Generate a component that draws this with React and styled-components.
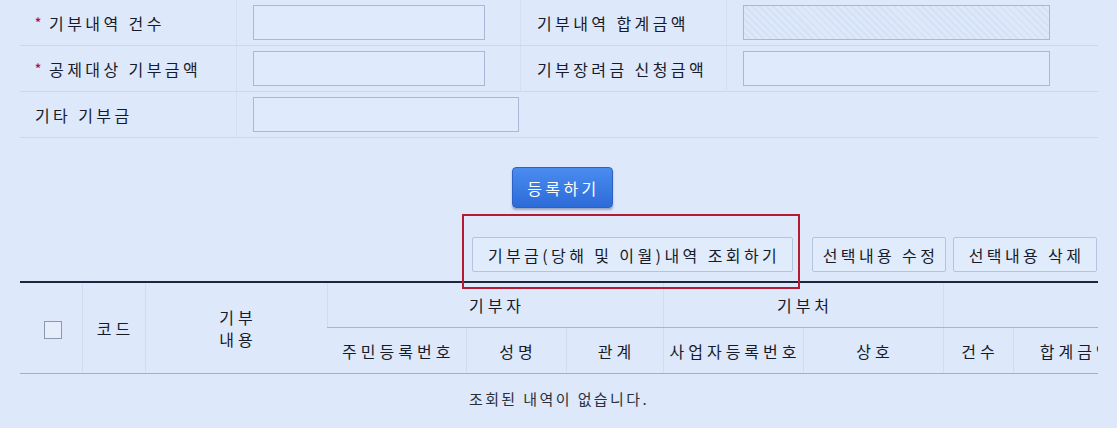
import React from 'react';
import styled, { createGlobalStyle } from 'styled-components';

const GlobalStyle = createGlobalStyle`
  html, body {
    margin: 0;
    padding: 0;
    background: #dde8fb;
  }
  body {
    font-family: "Noto Sans CJK KR", "Noto Sans", sans-serif;
    color: #161b2a;
  }
`;

const Page = styled.div`
  position: relative;
  width: 1117px;
  height: 428px;
  overflow: hidden;
  padding-left: 20px;
  box-sizing: border-box;
`;

const Form = styled.div`
  display: grid;
  grid-template-columns: 217px 284px 206px 371px;
  width: 1078px;
`;

const LabelCell = styled.div`
  display: flex;
  align-items: center;
  height: 46px;
  padding-left: ${p => (p.$pad ? p.$pad : 15)}px;
  border-bottom: 1px solid #cad7ef;
  border-right: 1px solid #d3def2;
  font-size: 16px;
  letter-spacing: 3.4px;
  white-space: nowrap;
  box-sizing: border-box;
`;

const Star = styled.span`
  color: #b2163f;
  font-size: 12px;
  font-weight: 700;
  margin-right: 8px;
  letter-spacing: 0;
  position: relative;
  top: -1px;
`;

const InputCell = styled.div`
  display: flex;
  align-items: center;
  height: 46px;
  padding-left: 16px;
  border-bottom: 1px solid #cad7ef;
  border-right: ${p => (p.$last ? 'none' : '1px solid #d3def2')};
  box-sizing: border-box;
  grid-column: ${p => p.$span || 'auto'};
`;

const TextInput = styled.div`
  width: ${p => p.$w}px;
  height: 35px;
  box-sizing: border-box;
  border: 1px solid #a9b8d6;
  background: ${p =>
    p.$disabled
      ? 'repeating-linear-gradient(45deg, #dde8fb 0px, #dde8fb 3px, #d5e1f6 3px, #d5e1f6 5px)'
      : '#dfeafc'};
`;

const Center = styled.div`
  display: flex;
  justify-content: center;
  width: 1078px;
  padding-top: 29px;
  padding-left: 6px;
  box-sizing: border-box;
`;

const PrimaryButton = styled.button`
  width: 101px;
  height: 41px;
  border: 1px solid #2c62c6;
  border-radius: 4px;
  background: linear-gradient(#4a8cf0, #2d6bd8);
  box-shadow: 0 2px 2px rgba(30, 50, 100, 0.35);
  color: #fff;
  font-family: "Noto Sans CJK KR", sans-serif;
  font-size: 16px;
  letter-spacing: 3.4px;
  text-indent: 3px;
  cursor: pointer;
  padding: 0;
`;

const ActionBar = styled.div`
  display: flex;
  justify-content: flex-end;
  width: 1077px;
  margin-top: 29px;
`;

const ActionButton = styled.button`
  width: ${p => p.$w}px;
  height: 35px;
  margin-left: ${p => p.$gap || 0}px;
  border: 1px solid #b4c4df;
  border-radius: 2px;
  background: #e0ebfc;
  color: #161b2a;
  font-family: "Noto Sans CJK KR", sans-serif;
  font-size: 16px;
  letter-spacing: 3.4px;
  text-indent: 3px;
  padding: 0;
  white-space: nowrap;
`;

const Highlight = styled.div`
  position: absolute;
  left: 462px;
  top: 214px;
  width: 338px;
  height: 75px;
  box-sizing: border-box;
  border: 2px solid #b31b34;
  pointer-events: none;
`;

const TableClip = styled.div`
  width: 1078px;
  overflow: hidden;
  margin-top: 9px;
  border-top: 2px solid #1c2640;
`;

const Table = styled.table`
  width: 1117px;
  table-layout: fixed;
  border-collapse: collapse;
  font-size: 16px;
  letter-spacing: 4px;
`;

const Th = styled.th`
  font-weight: 400;
  height: ${p => p.$h || 44}px;
  padding: 0 0 0 4px;
  text-align: center;
  vertical-align: middle;
  line-height: 22px;
  color: #161b2a;
  border-left: 1px solid #d1dcf1;
  border-bottom: 1px solid ${p => (p.$group ? '#a9b5cc' : '#a3afc7')};
  white-space: nowrap;
  &:first-child {
    border-left: none;
  }
`;

const Check = styled.span`
  display: inline-block;
  width: 16px;
  height: 16px;
  border: 1px solid #8a98b2;
  background: #e6eefc;
  vertical-align: middle;
`;

const Empty = styled.div`
  width: 1078px;
  text-align: center;
  font-size: 15px;
  letter-spacing: 2.4px;
  color: #2a2f3a;
  padding-top: 14px;
`;

export default function App() {
  return (
    <>
      <GlobalStyle />
      <Page>
        <Form>
          <LabelCell>
            <Star>*</Star>기부내역 건수
          </LabelCell>
          <InputCell>
            <TextInput $w={232} />
          </InputCell>
          <LabelCell $pad={16}>기부내역 합계금액</LabelCell>
          <InputCell $last>
            <TextInput $w={307} $disabled />
          </InputCell>

          <LabelCell>
            <Star>*</Star>공제대상 기부금액
          </LabelCell>
          <InputCell>
            <TextInput $w={232} />
          </InputCell>
          <LabelCell $pad={16}>기부장려금 신청금액</LabelCell>
          <InputCell $last>
            <TextInput $w={307} />
          </InputCell>

          <LabelCell>기타 기부금</LabelCell>
          <InputCell $last>
            <TextInput $w={266} />
          </InputCell>
          <InputCell $span="span 2" $last />
        </Form>

        <Center>
          <PrimaryButton>등록하기</PrimaryButton>
        </Center>

        <ActionBar>
          <ActionButton $w={321}>기부금(당해 및 이월)내역 조회하기</ActionButton>
          <ActionButton $w={134} $gap={19}>선택내용 수정</ActionButton>
          <ActionButton $w={144} $gap={7}>선택내용 삭제</ActionButton>
        </ActionBar>

        <TableClip>
          <Table>
            <colgroup>
              <col style={{ width: 62 }} />
              <col style={{ width: 63 }} />
              <col style={{ width: 182 }} />
              <col style={{ width: 139 }} />
              <col style={{ width: 100 }} />
              <col style={{ width: 97 }} />
              <col style={{ width: 140 }} />
              <col style={{ width: 140 }} />
              <col style={{ width: 70 }} />
              <col style={{ width: 124 }} />
            </colgroup>
            <thead>
              <tr>
                <Th rowSpan={2}>
                  <Check />
                </Th>
                <Th rowSpan={2}>코드</Th>
                <Th rowSpan={2}>
                  기부
                  <br />
                  내용
                </Th>
                <Th colSpan={3} $group>기부자</Th>
                <Th colSpan={2} $group>기부처</Th>
                <Th colSpan={2} $group></Th>
              </tr>
              <tr>
                <Th $h={45}>주민등록번호</Th>
                <Th $h={45}>성명</Th>
                <Th $h={45}>관계</Th>
                <Th $h={45}>사업자등록번호</Th>
                <Th $h={45}>상호</Th>
                <Th $h={45}>건수</Th>
                <Th $h={45}>합계금액</Th>
              </tr>
            </thead>
          </Table>
        </TableClip>

        <Empty>조회된 내역이 없습니다.</Empty>

        <Highlight />
      </Page>
    </>
  );
}
